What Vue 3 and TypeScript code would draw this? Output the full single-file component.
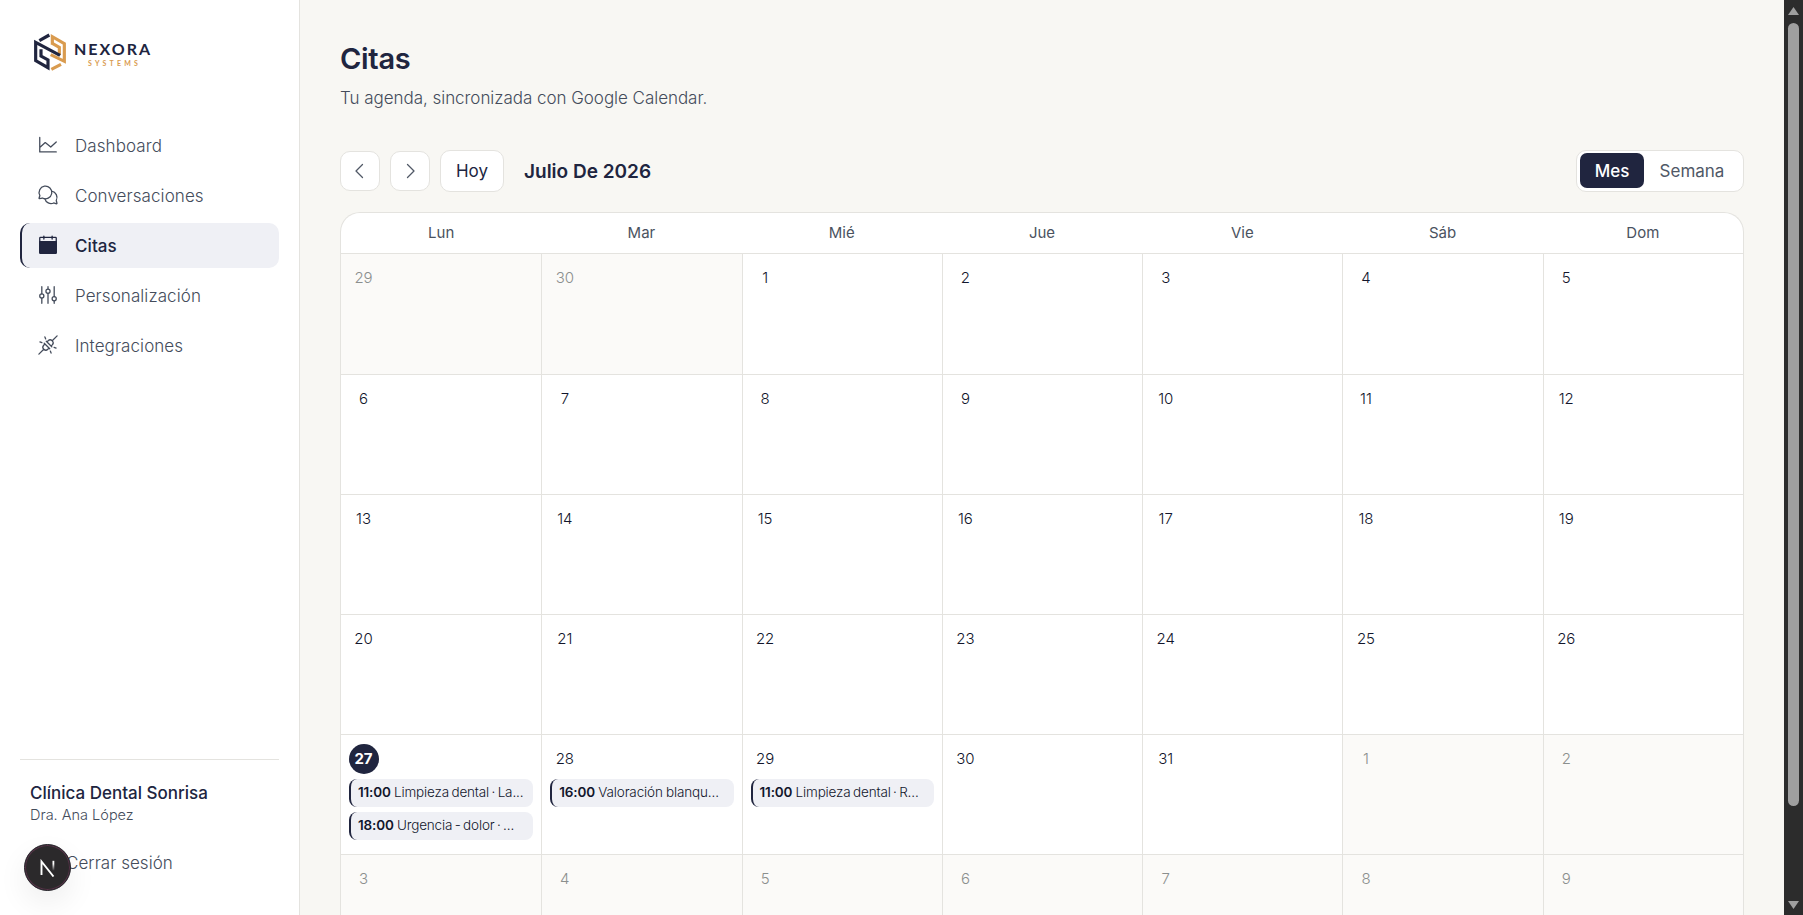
<script setup lang="ts">
interface NavItem { label: string; icon: string; active?: boolean }
interface Appointment { time: string; text: string; tight?: boolean }
interface Day { key: number; n: number; outside: boolean; today: boolean; events: Appointment[] }

const nav: NavItem[] = [
  { label: 'Dashboard', icon: 'chart' },
  { label: 'Conversaciones', icon: 'chats' },
  { label: 'Citas', icon: 'calendar', active: true },
  { label: 'Personalización', icon: 'sliders' },
  { label: 'Integraciones', icon: 'plugs' },
]
const weekdays = ['Lun', 'Mar', 'Mié', 'Jue', 'Vie', 'Sáb', 'Dom']
const events: Record<number, Appointment[]> = {
  27: [
    { time: '11:00', text: 'Limpieza dental · La...', tight: true },
    { time: '18:00', text: 'Urgencia - dolor · ...', tight: true },
  ],
  28: [{ time: '16:00', text: 'Valoración blanqu...' }],
  29: [{ time: '11:00', text: 'Limpieza dental · R...', tight: true }],
}
const days: Day[] = Array.from({ length: 42 }, (_, i) => {
  const d = i - 1
  const outside = d < 1 || d > 31
  const n = d < 1 ? d + 30 : d > 31 ? d - 31 : d
  return { key: i, n, outside, today: d === 27, events: outside ? [] : events[d] ?? [] }
})
</script>

<template>
  <div class="app">
    <aside class="sidebar">
      <div class="brand">
        <svg class="mark" width="34" height="38" viewBox="99 99 102 114" fill="none" stroke-width="9.500">
          <g stroke="#d99b4f">
            <path d="M157 134V110L193 131V184L152 164" />
            <path d="M157 130 178 142V166" />
            <path d="M154 208 183 193" />
          </g>
          <g stroke="#20253f">
            <path d="M118 122 148 105" />
            <path d="M180 166 107 127V182L144 203V180L123 168V148" />
          </g>
        </svg>
        <div class="wordmark"><b>NEXORA</b><span>SYSTEMS</span></div>
      </div>
      <nav>
        <a v-for="item in nav" :key="item.label" :class="['item', { active: item.active }]">
          <svg class="icon" viewBox="0 0 256 256" fill="none" stroke="currentColor" stroke-width="15" stroke-linecap="round" stroke-linejoin="round">
            <path v-if="item.icon === 'chart'" d="M32 40v168h192M32 156l64-56 64 52 64-60" />
            <template v-else-if="item.icon === 'chats'">
              <path d="M33.500 134a74 74 0 1 1 29 29l-34 8a5 5 0 0 1-5-5Z" />
              <path d="M170 84a74 74 0 0 1 54 108l9 33a5 5 0 0 1-5 5l-34-9A74 74 0 0 1 91 171" />
            </template>
            <template v-else-if="item.icon === 'calendar'">
              <rect x="32" y="40" width="192" height="184" rx="8" />
              <path d="M32 88h192v128a8 8 0 0 1-8 8H40a8 8 0 0 1-8-8Z" fill="currentColor" />
              <path d="M80 24v34M176 24v34" />
            </template>
            <template v-else-if="item.icon === 'sliders'">
              <path d="M56 32v84M56 164v60M128 32v28M128 108v116M200 32v116M200 196v28" />
              <circle cx="56" cy="140" r="24" /><circle cx="128" cy="84" r="24" /><circle cx="200" cy="172" r="24" />
            </template>
            <template v-else>
              <path d="M22 234 79 177M177 79l57-57M84 108l64 64M108 84l64 64M92 116l-14 14a33 33 0 0 0 0 46l2 2a33 33 0 0 0 46 0l14-14M116 92l14-14a33 33 0 0 1 46 0l2 2a33 33 0 0 1 0 46l-14 14M92 34l9 23M34 92l23 9M155 199l9 23M199 155l23 9" />
            </template>
          </svg>
          <span>{{ item.label }}</span>
        </a>
      </nav>
      <footer class="account">
        <strong>Clínica Dental Sonrisa</strong>
        <small>Dra. Ana López</small>
        <a class="logout">Cerrar sesión</a>
      </footer>
      <div class="badge">
        <svg width="18" height="18" viewBox="0 0 18 18" fill="none">
          <defs>
            <linearGradient id="nfade" x1="0" y1="0" x2="0" y2="1"><stop offset=".3" stop-color="#fff" /><stop offset="1" stop-color="#fff" stop-opacity="0" /></linearGradient>
          </defs>
          <path d="M2.500 16V2.500L14.500 17.500" stroke="#fff" stroke-width="1.900" />
          <path d="M13.500 1.800h1.800v10h-1.800z" fill="url(#nfade)" />
        </svg>
      </div>
    </aside>

    <main>
      <h1>Citas</h1>
      <p class="sub">Tu agenda, sincronizada con Google Calendar.</p>
      <div class="toolbar">
        <button class="arrow"><svg width="20" height="20" viewBox="0 0 20 20"><path d="M12.500 3.500 6 10l6.500 6.500" /></svg></button>
        <button class="arrow"><svg width="20" height="20" viewBox="0 0 20 20"><path d="M7.500 3.500 14 10l-6.500 6.500" /></svg></button>
        <button class="today-btn">Hoy</button>
        <h2>Julio De 2026</h2>
        <div class="toggle"><button class="on">Mes</button><button>Semana</button></div>
      </div>
      <section class="calendar">
        <div class="head"><span v-for="w in weekdays" :key="w">{{ w }}</span></div>
        <div class="grid">
          <div v-for="d in days" :key="d.key" :class="['day', { outside: d.outside, today: d.today }]">
            <span class="num">{{ d.n }}</span>
            <div v-for="e in d.events" :key="e.time" :class="['event', { tight: e.tight }]"><b>{{ e.time }}</b> <span>{{ e.text }}</span></div>
          </div>
        </div>
      </section>
    </main>

    <div class="scrollbar">
      <svg width="13" height="10" viewBox="0 0 13 10"><path d="M6.500 1 12 9H1Z" /></svg>
      <div class="thumb"></div>
      <svg class="down" width="13" height="10" viewBox="0 0 13 10"><path d="M6.500 9 12 1H1Z" /></svg>
    </div>
  </div>
</template>

<style>
html, body { margin: 0; overflow: hidden; }
</style>

<style scoped>
.app, .app * { box-sizing: border-box; }
.app { display: flex; width: 100vw; height: 100vh; overflow: hidden; background: #f8f7f3; color: #20253f; font-family: Inter, "Noto Sans", sans-serif; font-size: 17px; font-weight: 360; letter-spacing: 0; }
h1, h2, p { margin: 0; }
button { font: inherit; letter-spacing: inherit; color: inherit; padding: 0; background: #fff; border: 1px solid #e4e3df; }

.sidebar { position: relative; display: flex; flex-direction: column; width: 300px; flex: none; padding: 33px 20px 20px; background: #fff; border-right: 1px solid #e4e3df; }
.brand { display: flex; align-items: center; height: 38px; padding-left: 13px; }
.wordmark { display: flex; flex-direction: column; margin-left: 7px; margin-top: 2px; font-family: Lato, sans-serif; }
.wordmark b { font-size: 16px; line-height: 17px; letter-spacing: 2px; font-weight: 700; }
.wordmark span { padding-left: 14px; margin-top: 2px; color: #d99b4f; font-size: 7px; line-height: 8px; letter-spacing: 3.200px; font-weight: 700; }
nav { display: flex; flex-direction: column; gap: 5px; margin-top: 52px; }
.item { display: flex; align-items: center; gap: 16px; height: 45px; padding-left: 15px; border-left: 2px solid transparent; border-radius: 10px; color: #444c5b; letter-spacing: 0.080px; }
.item.active { color: #20253f; background: #eff0f5; border-left-color: #20253f; font-weight: 500; }
.icon { width: 22px; height: 22px; flex: none; margin-top: -1px; }
.account { display: flex; flex-direction: column; margin-top: auto; height: 136px; padding: 21px 10px 0; border-top: 1px solid #e4e3df; }
.account strong { font-size: 17px; line-height: 24px; font-weight: 500; letter-spacing: 0; }
.account small { font-size: 14.500px; line-height: 20px; color: #444c5b; }
.logout { margin: 26px 0 0 36px; line-height: 24px; color: #444c5b; letter-spacing: 0.040px; }
.badge { position: absolute; left: 24px; top: 844px; display: grid; place-items: center; width: 47px; height: 47px; border-radius: 50%; background: #2b292b; border: 1px solid #26242a; box-shadow: inset 0 0 0 1px #563247, 0 12px 30px rgba(0, 0, 0, .07); }

main { flex: 1; min-width: 0; padding: 40px 40px 0; }
h1 { font-size: 29px; line-height: 38px; font-weight: 600; letter-spacing: -0.300px; }
.sub { margin-top: 8px; line-height: 24px; color: #444c5b; letter-spacing: -0.040px; }
.toolbar { display: flex; align-items: center; gap: 10px; height: 42px; margin-top: 40px; }
.arrow { display: grid; place-items: center; width: 40px; height: 40px; border-radius: 10px; }
.arrow path { fill: none; stroke: #505866; stroke-width: 1.300; stroke-linecap: round; stroke-linejoin: round; }
.today-btn { width: 64px; height: 42px; border-radius: 10px; font-weight: 400; }
h2 { margin-left: 10px; font-size: 19px; font-weight: 600; letter-spacing: 0; white-space: nowrap; }
.toggle { display: flex; width: 168px; height: 42px; margin-left: auto; padding: 2px 3px 3px; background: #fff; border: 1px solid #e4e3df; border-radius: 10px; }
.toggle button { flex: 1; height: 35px; border: 0; border-radius: 7px; color: #505866; letter-spacing: 0; font-weight: 400; }
.toggle .on { flex: none; width: 64px; background: #20253f; color: #fff; font-weight: 500; }
.calendar { margin-top: 20px; overflow: hidden; background: #fff; border: 1px solid #e4e3df; border-bottom: 0; border-radius: 20px 20px 0 0; }
.head { display: grid; grid-template-columns: repeat(7, 1fr); height: 41px; border-bottom: 1px solid #e4e3df; color: #4a5260; font-size: 15px; line-height: 40px; text-align: center; font-weight: 400; }
.grid { display: grid; grid-template-columns: repeat(7, minmax(0, 1fr)); grid-auto-rows: 120px; }
.day { padding: 9px 8px 0; border-left: 1px solid #e4e3df; border-top: 1px solid #e4e3df; }
.day:nth-child(7n + 1) { border-left: 0; }
.day:nth-child(-n + 7) { border-top: 0; }
.num { display: grid; place-items: center; width: 30px; height: 30px; margin-bottom: 5px; padding-right: 1px; border-radius: 50%; color: #12162c; font-size: 15px; line-height: 18px; letter-spacing: -0.100px; }
.outside { background: #fbfaf8; }
.outside .num { color: #8b8f8e; }
.today .num { background: #20253f; color: #fff; font-weight: 700; }
.event { height: 28px; margin-bottom: 5px; padding-left: 7px; border-left: 2px solid #20253f; border-radius: 8px; background: #eff0f5; color: #12162c; font-size: 13.500px; line-height: 27px; letter-spacing: -0.130px; word-spacing: -0.500px; white-space: nowrap; overflow: hidden; }
.event b { font-weight: 600; letter-spacing: -0.150px; }
.tight span { letter-spacing: -0.150px; word-spacing: -1.200px; }

.scrollbar { display: flex; flex-direction: column; align-items: center; width: 19px; flex: none; padding: 6px 0 5px; background: #2c2c2c; }
.scrollbar path { fill: #9f9f9f; }
.scrollbar svg { flex: none; }
.thumb { width: 11px; height: 783px; margin-top: 7px; border-radius: 6px; background: #9f9f9f; }
.down { margin-top: auto; }
</style>
